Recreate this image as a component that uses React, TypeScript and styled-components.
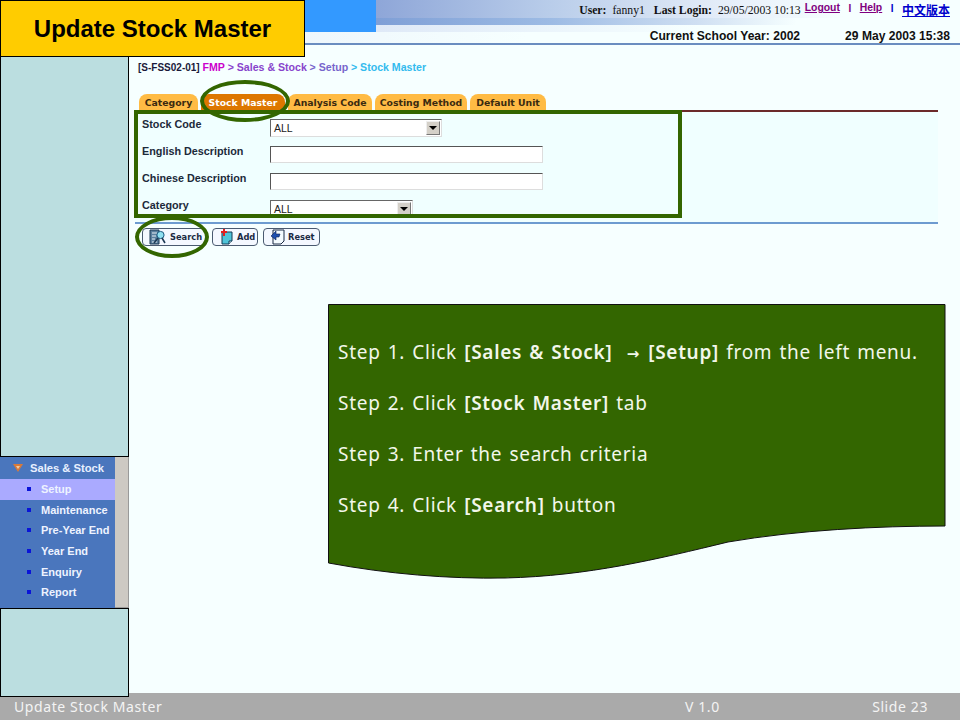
import React from "react";
import styled, { createGlobalStyle } from "styled-components";

const Global = createGlobalStyle`
  html, body { margin: 0; padding: 0; background: #f6ffff; }
  * { box-sizing: border-box; }
`;

const Slide = styled.div`
  position: relative; width: 960px; height: 720px; overflow: hidden;
  display: flex; flex-direction: column; background: #f6ffff;
  font-family: "Liberation Sans", Arial, sans-serif;
`;
const TitleBox = styled.div`
  position: absolute; left: 0; top: 0; width: 305px; height: 57px; z-index: 3;
  display: flex; align-items: center; justify-content: center;
  background: #ffcc00; border: 1px solid #000; color: #000;
  font-size: 24px; font-weight: 700;
`;
const Body = styled.div`
  display: flex; height: 697px;
`;
const Sidebar = styled.aside`
  width: 130px; flex: none; display: flex; flex-direction: column; padding-top: 56px;
  position: relative; z-index: 1;
`;
const TealPanel = styled.div<{ $h: number }>`
  height: ${p => p.$h}px; width: 129px; background: #bbdee0; border: 1px solid #000;
`;
const Menu = styled.nav`
  height: 151px; width: 129px; display: flex; background: #cdc9c3;
  border-right: 1px solid #999; border-bottom: 1px solid #999;
`;
const MenuList = styled.ul`
  list-style: none; margin: 0; padding: 0; width: 115px; height: 151px; background: #4a76bd;
`;
const MenuHead = styled.li`
  height: 22px; display: flex; align-items: center; padding: 0 0 1px 13px; gap: 7px;
  color: #e8f0ff; font-size: 11.2px; font-weight: 700;
`;
const MenuItem = styled.li<{ $active?: boolean }>`
  height: 20.6px; display: flex; align-items: center; padding-left: 27px; gap: 10px;
  color: #eef3ff; font-size: 11px; font-weight: 700; white-space: nowrap;
  background: ${p => (p.$active ? "#aaaaff" : "transparent")};
`;
const Bullet = styled.span`
  width: 4px; height: 4px; background: #0a14d8; flex: none;
`;
const Content = styled.main`
  flex: 1; min-width: 0; display: flex; flex-direction: column;
`;
const Header = styled.header`
  height: 45px; flex: none; border-bottom: 2px solid #6a8dc0; display: flex; flex-direction: column;
  margin-left: -130px;
`;
const HeaderTop = styled.div`
  height: 32px; display: flex; flex: none;
`;
const BlueBlock = styled.div`
  width: 376px; flex: none; background: #3399ff;
`;
const Ribbon = styled.div`
  flex: 1; display: flex; justify-content: flex-end; align-items: flex-start;
  padding: 2px 10px 0 0;
  background:
    linear-gradient(90deg, #8ea6d8 0, #b9cdea 30%, #e8f0fa 62%, #f6ffff 80%) 0 0 / 100% 18px no-repeat,
    linear-gradient(90deg, #7f9fd6 0, #9dbbe4 30%, #cfdff2 55%, #f6ffff 72%) 0 18px / 100% 7px no-repeat,
    linear-gradient(90deg, #dfe9f7 0, #f6ffff 55%) 0 25px / 100% 7px no-repeat;
`;
const UserInfo = styled.span`
  font-family: "Liberation Serif", "Times New Roman", serif; font-size: 11.7px; color: #111; margin: 2px 4px 0 0;
  white-space: nowrap;
  b { margin-right: 3px; }
  i { font-style: normal; margin-right: 9px; }
`;
const TopLink = styled.a<{ $c: string; $zh?: boolean }>`
  color: ${p => p.$c}; text-decoration: underline; font-weight: 700; font-size: ${p => (p.$zh ? "12px" : "10.4px")};
  white-space: nowrap; margin-top: ${p => (p.$zh ? "-1px" : "0")};
  font-family: "Liberation Sans", "Noto Sans CJK TC", sans-serif;
`;
const Sep = styled.span<{ $c: string }>`
  color: ${p => p.$c}; font-weight: 700; font-size: 10px; margin: 1px 8.5px 0;
`;
const SchoolRow = styled.div`
  display: flex; justify-content: flex-end; gap: 45px; padding: 0 10px 0 0; height: 11px; align-items: flex-start;
  font-size: 12.1px; font-weight: 700; color: #111; line-height: 9px;
  background: linear-gradient(90deg, #e4edf8 0, #f6ffff 55%);
`;
const Breadcrumb = styled.div`
  margin: 16px 0 0 8px; height: 12px; line-height: 12px; font-size: 10px; font-weight: 700; color: #1a1a3a;
  white-space: nowrap;
`;
const Crumb = styled.span<{ $c: string }>` color: ${p => p.$c}; font-size: 10.6px; `;
const Tabs = styled.div`
  display: flex; gap: 3px; margin: 21px 0 0 9px; height: 16px;
`;
const Tab = styled.div<{ $w: number; $active?: boolean }>`
  width: ${p => p.$w}px; height: 16px; border-radius: 8px 8px 0 0;
  display: flex; align-items: center; justify-content: center;
  font-family: "DejaVu Sans", Verdana, sans-serif; font-size: 9.3px; font-weight: 700; white-space: nowrap;
  background: ${p => (p.$active ? "#dd7700" : "#ffbb44")};
  color: ${p => (p.$active ? "#fff" : "#3a2a10")};
`;
const FormPanel = styled.section`
  margin-left: 5px; width: 803px; height: 114px; overflow: hidden; background: #f0ffff;
  border-top: 2px solid #6b2a2a; border-bottom: 2px solid #6d9bd0;
  display: grid; grid-template-columns: 128px 1fr; grid-auto-rows: 27px; padding: 6px 0 0 7px;
`;
const FieldLabel = styled.label`
  font-size: 10.8px; font-weight: 700; color: #1c2a3a; line-height: 12px;
`;
const FieldCell = styled.div`
  padding-top: 1px;
`;
const SelectBox = styled.div<{ $w: number }>`
  width: ${p => p.$w}px; height: 18px; background: #fff; display: flex; align-items: center;
  justify-content: space-between; padding: 0 1px 0 3px;
  border: 1px solid; border-color: #666 #ddd #ddd #666; font-size: 10.5px; color: #222;
`;
const SelectArrow = styled.span`
  width: 14px; height: 14px; background: #d4d0c8; display: flex; align-items: center; justify-content: center;
  border: 1px solid; border-color: #eee #777 #777 #eee;
  &::after {
    content: ""; border-left: 4px solid transparent; border-right: 4px solid transparent; border-top: 4px solid #000;
  }
`;
const TextBox = styled.div`
  width: 273px; height: 17px; background: #fff; border: 1px solid; border-color: #555 #ddd #ddd #555;
`;
const ButtonRow = styled.div`
  display: flex; gap: 5px; margin: 4px 0 0 12px;
`;
const ActionButton = styled.button<{ $w: number }>`
  width: ${p => p.$w}px; height: 18px; padding: 0 0 0 6px; background: #f4f8ff; border: 1px solid #4a5a70; border-radius: 4px;
  display: flex; align-items: center; gap: 3px;
  font-family: "DejaVu Sans", Verdana, sans-serif; font-size: 8.3px; font-weight: 700; color: #1b2a44;
`;
const GreenFrame = styled.div`
  position: absolute; left: 134px; top: 110px; width: 548px; height: 108px; border: 4px solid #336600; z-index: 2;
`;
const Ring = styled.div<{ $l: number; $t: number; $w: number; $h: number }>`
  position: absolute; left: ${p => p.$l}px; top: ${p => p.$t}px; width: ${p => p.$w}px; height: ${p => p.$h}px;
  border: 4px solid #336600; border-radius: 50%; z-index: 2;
`;
const Callout = styled.div`
  position: absolute; left: 328px; top: 304px; width: 618px; height: 276px; z-index: 2; padding: 23px 0 0 10px;
`;
const CalloutShape = styled.svg`
  position: absolute; inset: 0; z-index: -1;
`;
const Step = styled.p`
  margin: 0; height: 51px; line-height: 51px; white-space: nowrap; color: #f2f7ea;
  font-family: "Noto Sans", Tahoma, sans-serif; font-size: 19px; letter-spacing: 0.72px; word-spacing: 1.5px;
  b { font-weight: 600; }
`;
const StepArrow = styled.span`
  font-family: "DejaVu Sans", sans-serif; font-size: 15px; font-weight: 700; margin: 0 1px 0 7px;
`;
const Footer = styled.footer`
  height: 27px; margin-top: -4px; flex: none; background: #aaaaaa; color: #f4f4f4; display: flex; align-items: center;
  font-family: "Noto Sans", Tahoma, sans-serif; font-size: 14px; letter-spacing: 0.6px; padding: 0 32px 0 14px;
`;
const FootLeft = styled.span` width: 671px; `;
const FootMid = styled.span` flex: 1; `;

const SearchIcon = () => (
  <svg width="18" height="16" viewBox="0 0 18 16">
    <path d="M1 1h9v14H1z" fill="#5b7f9e" stroke="#1d3a55" />
    <path d="M3 4h5M3 7h4M3 10h3M3 13h5" stroke="#e6f0f5" />
    <circle cx="11.5" cy="6" r="3.6" fill="#8fe0f0" stroke="#1d5a80" />
    <path d="M9 9l-4 5M13 9l3 5" stroke="#1d3a55" strokeWidth="1.6" />
  </svg>
);
const AddIcon = () => (
  <svg width="15" height="16" viewBox="0 0 15 16">
    <path d="M3 3h10v9l-3 3H3z" fill="#4fc4d8" stroke="#123a55" />
    <path d="M10 15v-3h3" fill="#e0f5fa" stroke="#123a55" />
    <path d="M5 0v7M2 3h6" stroke="#e02020" strokeWidth="2" />
  </svg>
);
const ResetIcon = () => (
  <svg width="15" height="16" viewBox="0 0 15 16">
    <path d="M3 1h11v11l-3 3H3z" fill="#f4fbff" stroke="#1b2a44" />
    <path d="M1 7l5-5v3l4 0-1 3-3 0v3z" fill="#1f4fae" stroke="#0a1f55" strokeWidth=".6" />
  </svg>
);
const TriIcon = () => (
  <svg width="10" height="8" viewBox="0 0 10 8">
    <path d="M0 0h10L5 8z" fill="#d87a3a" />
    <path d="M3 2h4L5 5z" fill="#f2c9a0" />
  </svg>
);

export default function App() {
  return (
    <Slide>
      <Global />
      <TitleBox>Update Stock Master</TitleBox>
      <Body>
        <Sidebar>
          <TealPanel $h={401} />
          <Menu>
            <MenuList>
              <MenuHead><TriIcon />Sales &amp; Stock</MenuHead>
              <MenuItem $active><Bullet />Setup</MenuItem>
              <MenuItem><Bullet />Maintenance</MenuItem>
              <MenuItem><Bullet />Pre-Year End</MenuItem>
              <MenuItem><Bullet />Year End</MenuItem>
              <MenuItem><Bullet />Enquiry</MenuItem>
              <MenuItem><Bullet />Report</MenuItem>
            </MenuList>
          </Menu>
          <TealPanel $h={89} />
        </Sidebar>
        <Content>
          <Header>
            <HeaderTop>
              <BlueBlock />
              <Ribbon>
                <UserInfo><b>User:</b> <i>fanny1</i><b>Last Login:</b> 29/05/2003 10:13</UserInfo>
                <TopLink $c="#800080">Logout</TopLink>
                <Sep $c="#800080">I</Sep>
                <TopLink $c="#800080">Help</TopLink>
                <Sep $c="#0000cc">I</Sep>
                <TopLink $c="#0000cc" $zh>中文版本</TopLink>
              </Ribbon>
            </HeaderTop>
            <SchoolRow><span>Current School Year: 2002</span><span>29 May 2003 15:38</span></SchoolRow>
          </Header>
          <Breadcrumb>
            [S-FSS02-01] <Crumb $c="#cc00cc">FMP</Crumb>{" "}
            <Crumb $c="#8844cc">&gt; Sales &amp; Stock</Crumb>{" "}
            <Crumb $c="#7766cc">&gt; Setup</Crumb>{" "}
            <Crumb $c="#33bbee">&gt; Stock Master</Crumb>
          </Breadcrumb>
          <Tabs>
            <Tab $w={59}>Category</Tab>
            <Tab $w={84} $active>Stock Master</Tab>
            <Tab $w={84}>Analysis Code</Tab>
            <Tab $w={92}>Costing Method</Tab>
            <Tab $w={76}>Default Unit</Tab>
          </Tabs>
          <FormPanel>
            <FieldLabel>Stock Code</FieldLabel>
            <FieldCell><SelectBox $w={172}>ALL<SelectArrow /></SelectBox></FieldCell>
            <FieldLabel>English Description</FieldLabel>
            <FieldCell><TextBox /></FieldCell>
            <FieldLabel>Chinese Description</FieldLabel>
            <FieldCell><TextBox /></FieldCell>
            <FieldLabel>Category</FieldLabel>
            <FieldCell><SelectBox $w={143}>ALL<SelectArrow /></SelectBox></FieldCell>
          </FormPanel>
          <ButtonRow>
            <ActionButton $w={65}><SearchIcon />Search</ActionButton>
            <ActionButton $w={46}><AddIcon />Add</ActionButton>
            <ActionButton $w={57}><ResetIcon />Reset</ActionButton>
          </ButtonRow>
        </Content>
      </Body>
      <Footer>
        <FootLeft>Update Stock Master</FootLeft>
        <FootMid>V 1.0</FootMid>
        <span>Slide 23</span>
      </Footer>
      <GreenFrame />
      <Ring $l={200} $t={80} $w={90} $h={42} />
      <Ring $l={135} $t={216} $w={74} $h={42} />
      <Callout>
        <CalloutShape width="618" height="276" viewBox="0 0 618 276">
          <path d="M.5 .5H617V222C550 222 470 226 400 238C330 255 260 272 177 274C120 275 60 270 .5 259Z" fill="#336600" stroke="#111" />
        </CalloutShape>
        <Step>Step 1. Click <b>[Sales &amp; Stock]</b> <StepArrow>→</StepArrow> <b>[Setup]</b> from the left menu.</Step>
        <Step>Step 2. Click <b>[Stock Master]</b> tab</Step>
        <Step>Step 3. Enter the search criteria</Step>
        <Step>Step 4. Click <b>[Search]</b> button</Step>
      </Callout>
    </Slide>
  );
}
